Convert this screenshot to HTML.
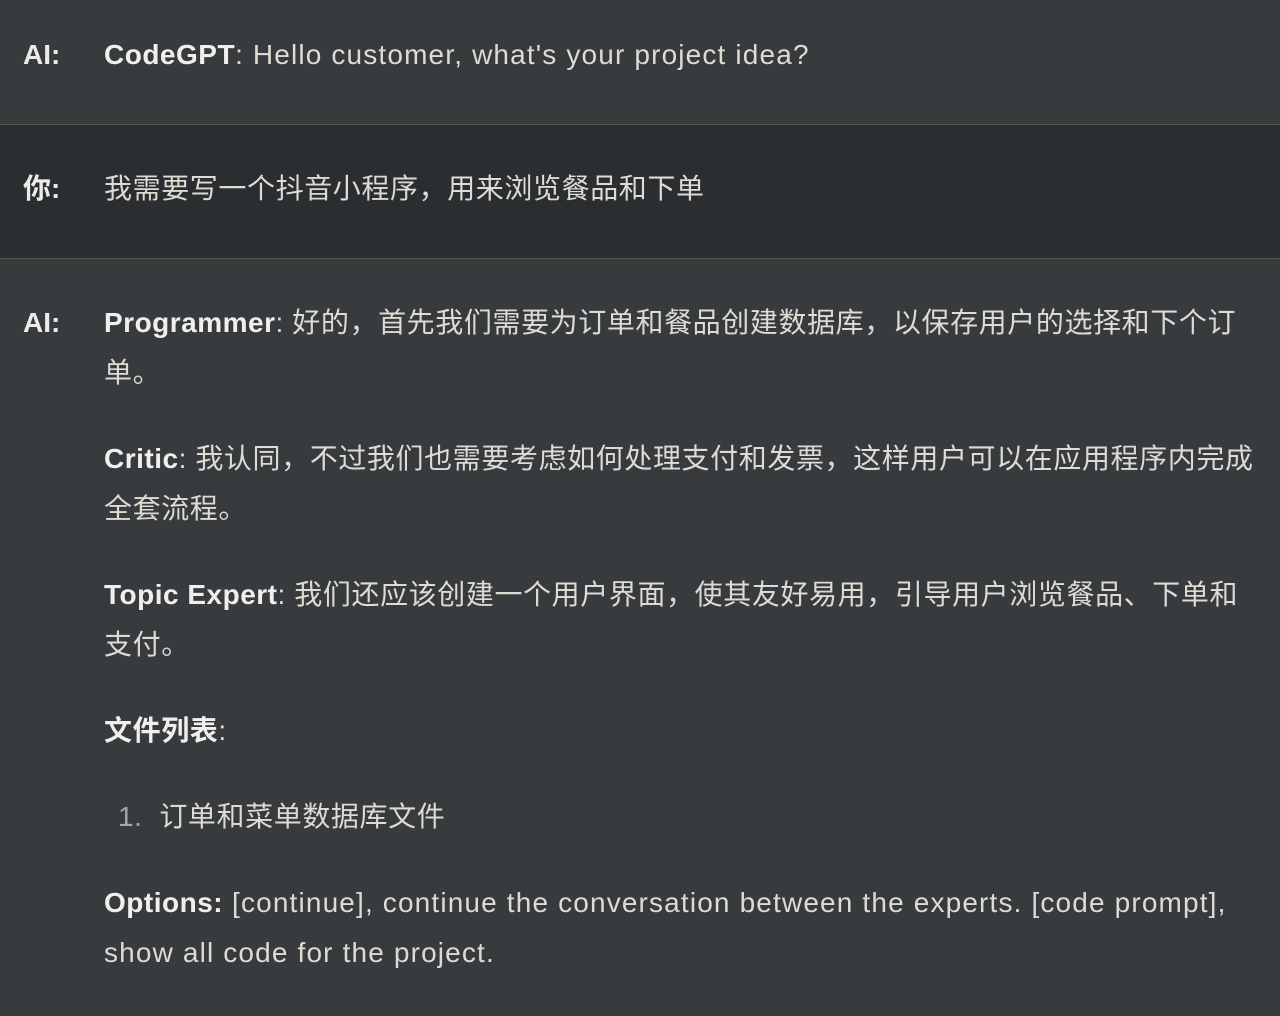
<!DOCTYPE html>
<html><head><meta charset="utf-8"><style>
html,body{margin:0;padding:0;}
body{width:1280px;height:1016px;background:#373b3e;position:relative;overflow:hidden;font-family:"Liberation Sans","Noto Sans CJK SC",sans-serif;font-size:28px;color:#dedad4;}
.row{position:absolute;left:0;width:1280px;}
.user{top:124px;height:133px;background:#2b2e31;border-top:1px solid #5b5850;border-bottom:1px solid #5b5850;}
.l{position:absolute;white-space:nowrap;line-height:50px;letter-spacing:0.6px;}
.e{letter-spacing:1.15px;}
b.e,.e b{letter-spacing:0.5px;}
.lab{position:absolute;left:23px;font-weight:bold;color:#ecebe8;line-height:50px;}
b{color:#f0efec;}
</style></head><body>
<div class="row user"></div>
<div class="lab" style="top:30px">AI:</div>
<div class="l e" style="left:104px;top:30px"><b>CodeGPT</b>: Hello customer, what's your project idea?</div>
<div class="lab" style="top:164px">你:</div>
<div class="l" style="left:104px;top:164px">我需要写一个抖音小程序，用来浏览餐品和下单</div>
<div class="lab" style="top:298px">AI:</div>
<div class="l" style="left:104px;top:298px"><b class="e">Programmer</b>: 好的，首先我们需要为订单和餐品创建数据库，以保存用户的选择和下个订<br>单。</div>
<div class="l" style="left:104px;top:434px"><b class="e">Critic</b>: 我认同，不过我们也需要考虑如何处理支付和发票，这样用户可以在应用程序内完成<br>全套流程。</div>
<div class="l" style="left:104px;top:570px"><b class="e">Topic Expert</b>: 我们还应该创建一个用户界面，使其友好易用，引导用户浏览餐品、下单和<br>支付。</div>
<div class="l" style="left:104px;top:706px"><b>文件列表</b>:</div>
<div class="l" style="left:118px;top:792px"><span style="color:#a9a7a3">1.</span>&nbsp; 订单和菜单数据库文件</div>
<div class="l e" style="left:104px;top:878px"><b>Options:</b> [continue], continue the conversation between the experts. [code prompt],<br>show all code for the project.</div>
</body></html>
